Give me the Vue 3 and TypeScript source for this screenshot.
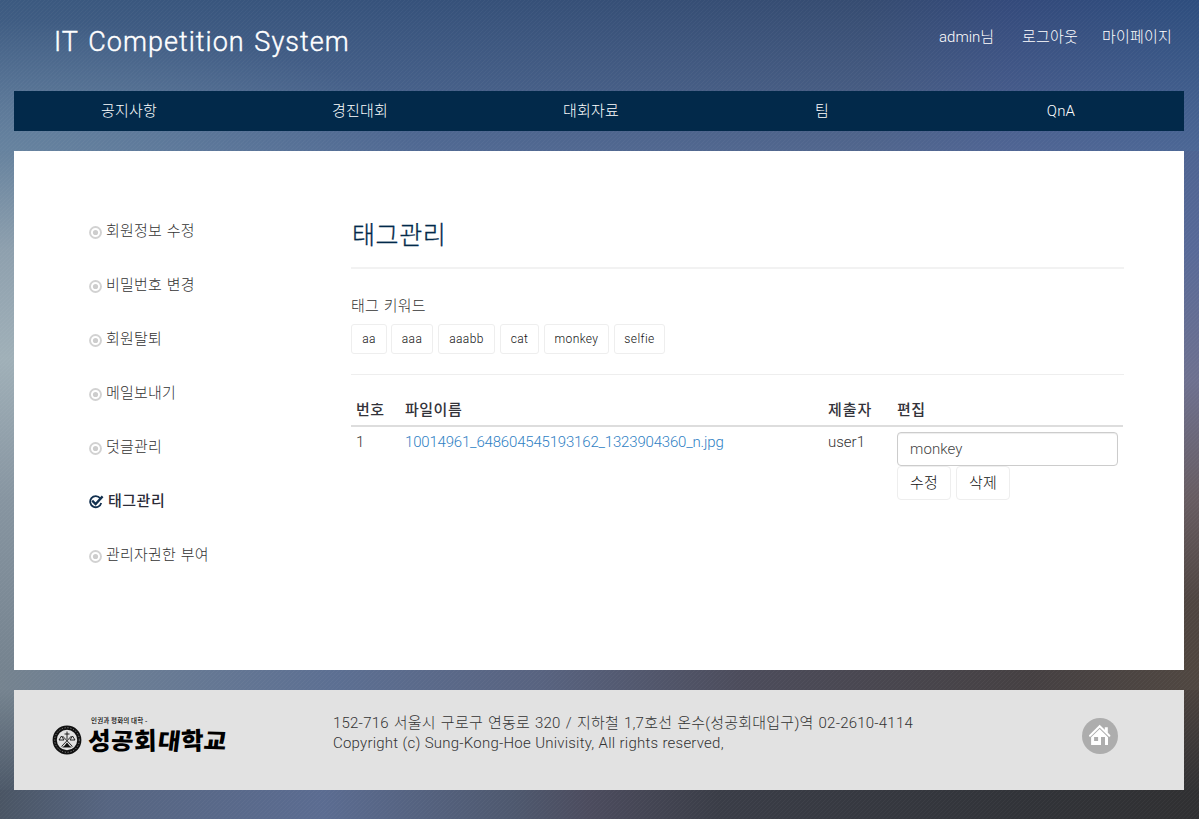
<script setup lang="ts">
interface MenuItem { label: string; active?: boolean }
const nav: string[] = ['공지사항', '경진대회', '대회자료', '팀', 'QnA']
const menu: MenuItem[] = [
  { label: '회원정보 수정' },
  { label: '비밀번호 변경' },
  { label: '회원탈퇴' },
  { label: '메일보내기' },
  { label: '덧글관리' },
  { label: '태그관리', active: true },
  { label: '관리자권한 부여' },
]
const tags = [
  { name: 'aa', width: 36 },
  { name: 'aaa', width: 42 },
  { name: 'aaabb', width: 57 },
  { name: 'cat', width: 39 },
  { name: 'monkey', width: 65 },
  { name: 'selfie', width: 51 },
]
const keyword = 'monkey'
</script>

<template>
  <div class="page">
    <header class="top">
      <h1 class="brand">IT Competition System</h1>
      <div class="user">
        <a class="u1">admin님</a>
        <a class="u2">로그아웃</a>
        <a class="u3">마이페이지</a>
      </div>
    </header>
    <nav class="nav">
      <a v-for="n in nav" :key="n">{{ n }}</a>
    </nav>
    <main class="content">
      <ul class="side">
        <li v-for="m in menu" :key="m.label" :class="{ active: m.active }">
          <svg v-if="m.active" class="check" viewBox="0 0 15 14">
            <path d="M11.2 3.2A5.6 5.6 0 1 0 12.2 8" fill="none" stroke="#12304f" stroke-width="1.8" />
            <path d="M3.2 5.6 6.6 9 13.6 1.4" fill="none" stroke="#12304f" stroke-width="2.3" />
          </svg>
          <svg v-else class="dot" viewBox="0 0 13 13">
            <circle cx="6.5" cy="6.5" r="5.5" fill="none" stroke="#d2d2d2" stroke-width="1.9" />
            <circle cx="6.5" cy="6.5" r="2.6" fill="#cdcdcd" />
          </svg>
          <span>{{ m.label }}</span>
        </li>
      </ul>
      <section class="panel">
        <h2>태그관리</h2>
        <div class="rule thick"></div>
        <p class="caption">태그 키워드</p>
        <div class="tags">
          <button v-for="t in tags" :key="t.name" class="btn tag" :style="{ width: t.width + 'px' }">{{ t.name }}</button>
        </div>
        <div class="rule"></div>
        <div class="table">
          <div class="row head"><b>번호</b><b>파일이름</b><b>제출자</b><b>편집</b></div>
          <div class="row body">
            <span>1</span>
            <a class="file">10014961_648604545193162_1323904360_n.jpg</a>
            <span class="author">user1</span>
            <div>
              <input class="field" type="text" :value="keyword" />
              <div class="actions">
                <button class="btn act">수정</button>
                <button class="btn act">삭제</button>
              </div>
            </div>
          </div>
        </div>
      </section>
    </main>
    <footer class="foot">
      <div class="logo">
        <svg class="seal" viewBox="0 0 30 30">
          <circle cx="15" cy="15" r="12.3" fill="none" stroke="#111" stroke-width="4.2" />
          <circle cx="15" cy="15" r="12.3" fill="none" stroke="#888" stroke-width="1" stroke-dasharray="1.2 1.7" />
          <path d="M15 6.5v8M12.5 9h5M7 15l2.5-4 2.5 4zM18 15l2.5-4 2.5 4zM9.5 21.5 19.5 11M20.5 21.5 10.5 11M10.5 22h9" stroke="#111" stroke-width=".9" fill="none" />
          <path d="M15 17.5 11.5 22h7z" fill="#111" />
        </svg>
        <div class="name">
          <div class="motto">인권과 평화의 대학 -</div>
          <div class="script"><span>성</span><span>공</span><span>회</span><span>대</span><span>학</span><span>교</span></div>
        </div>
      </div>
      <div class="address">
        <p class="a1">152-716 서울시 구로구 연동로 320 / 지하철 1,7호선 온수(성공회대입구)역 02-2610-4114</p>
        <p class="a2">Copyright (c) Sung-Kong-Hoe Univisity, All rights reserved,</p>
      </div>
      <svg class="home" viewBox="0 0 36 36">
        <circle cx="18" cy="18" r="18" fill="#adadad" />
        <path d="M22.8 9.3h3v6l-3-3z" fill="#fff" />
        <path d="M8 17.7 17.7 8.2 27.4 17.7" fill="none" stroke="#fff" stroke-width="2" stroke-linecap="round" />
        <path fill-rule="evenodd" d="M9.1 19.2 17.7 10.9 26 19.2V27H23v-8h-4v8H9.1zM12.1 19v4h4v-4z" fill="#fff" />
      </svg>
    </footer>
  </div>
</template>

<style>
body { margin: 0; overflow: hidden; }
</style>

<style scoped>
* { box-sizing: border-box; }
.page {
  width: 1199px;
  height: 819px;
  padding: 0 15px 0 14px;
  font: 300 15px/20px Roboto, "Noto Sans CJK KR", sans-serif;
  letter-spacing: .2px;
  color: #333;
  background:
    linear-gradient(135deg, rgba(255,255,255,.035) 12.5%, transparent 12.5% 50%, rgba(255,255,255,.035) 50% 62.5%, transparent 62.5%) 0 0 / 4px 4px,
    radial-gradient(ellipse 420px 130px at 0 151px, rgba(115,145,165,.6), rgba(115,145,165,0)) 0 0 / 100% 151px no-repeat,
    linear-gradient(180deg, rgba(125,145,188,0) 0, rgba(125,145,188,0.38) 151px) 0 0 / 100% 151px no-repeat,
    linear-gradient(90deg, #3c5a80, #36527b 33%, #364c71 72%, #344a7b 84%, #2e4e7e) 0 0 / 100% 151px no-repeat,
    linear-gradient(180deg, #66829e, #8ea0ae 19%, #a0b0b8 40%, #8795a1 67%, #75838f) 0 151px / 14px 519px no-repeat,
    linear-gradient(180deg, #4e6492, #586a98 19%, #6e7190 44%, #685d62 67%, #4f4541 87%, #50463f) 100% 151px / 15px 519px no-repeat,
    linear-gradient(90deg, #75838f, #6b7d94 10%, #5c6f92 28%, #586380 45%, #4c4c5b 62%, #454042 86%, #504741) 0 670px / 100% 20px no-repeat,
    linear-gradient(180deg, #75838f, #4d5969) 0 690px / 14px 100px no-repeat,
    linear-gradient(180deg, #4b423e, #323234) 100% 690px / 15px 100px no-repeat,
    linear-gradient(90deg, #4a5564, #566581 9%, #5b6c91 27%, #4e586e 43%, #4c4c5e 49%, #3a3d47 60%, #313338 86%, #303032) 0 790px / 100% 29px no-repeat;
}
h1, h2, p, ul { margin: 0; padding: 0; font-weight: 300; }
.top { height: 91px; display: flex; justify-content: space-between; }
.brand { padding: 25px 0 0 40px; font-size: 27px; line-height: 34px; color: #fff; letter-spacing: 1.05px; word-spacing: 2px; -webkit-text-stroke: .4px #fff; }
.user { display: flex; padding: 27px 12px 0 0; color: #fff; white-space: nowrap; }
.u1 { width: 83px; letter-spacing: 0; }
.u2 { width: 80px; }
.u3 { width: 70px; }
.nav { height: 40px; display: flex; background: #02294a; color: #fff; }
.nav a { width: 231px; padding-right: 1px; line-height: 40px; text-align: center; }
.nav a:last-child { flex: 1; padding: 0; }
.content { height: 519px; margin-top: 20px; background: #fff; display: flex; }
.side { width: 337px; padding: 70px 0 0 75px; list-style: none; word-spacing: 1px; }
.side li { height: 54px; display: flex; line-height: 20px; }
.side span { margin-left: 4px; }
.dot { width: 13px; height: 13px; margin-top: 5px; }
.check { width: 15px; height: 14px; margin-top: 4px; }
.side .active { font-weight: 500; color: #2c2c38; letter-spacing: .5px; }
.panel { width: 773px; padding-top: 67px; }
h2 { font-size: 25px; line-height: 36px; color: #02294a; padding-left: 1px; letter-spacing: .6px; -webkit-text-stroke: .3px #02294a; }
.rule { height: 1px; background: #eee; }
.rule.thick { height: 2px; margin-top: 13px; background: #f2f2f2; }
.caption { margin-top: 27px; word-spacing: 1px; }
.tags { display: flex; gap: 5px; margin: 8px 0 20px; }
.tags .btn:first-child { margin-right: -1px; }
.btn { font: 300 12px/18px Roboto, "Noto Sans CJK KR", sans-serif; color: #111; background: #fff; border: 1px solid #eee; border-radius: 3px; padding: 0; letter-spacing: .4px; }
.tag { height: 30px; }
.table { width: 772px; padding-top: 25px; }
.row { display: grid; grid-template-columns: 49px 423px 69px 226px; padding-left: 5px; }
.head { height: 27px; border-bottom: 2px solid #ddd; color: #33333a; letter-spacing: .5px; }
.head b { font-weight: 500; }
.head b:nth-child(3) { letter-spacing: 1px; }
.body { padding-top: 5px; }
.file { color: #2f7fc4; letter-spacing: -.18px; }
.author { letter-spacing: 0; }
.field { display: block; width: 221px; height: 34px; padding: 0 12px; border: 1px solid #ccc; border-radius: 4px; box-shadow: inset 0 1px 1px rgba(0,0,0,.075); font: 300 15px Roboto, sans-serif; color: #444; letter-spacing: .1px; }
.actions { display: flex; gap: 5px; }
.act { width: 54px; height: 34px; font-size: 15px; border-radius: 4px; letter-spacing: .1px; }
.foot { height: 100px; margin-top: 20px; background: #e2e2e2; display: flex; }
.logo { width: 176px; margin: 26px 0 0 38px; display: flex; }
.seal { width: 30px; height: 30px; margin-top: 9px; }
.name { margin-left: 6px; color: #000; white-space: nowrap; font-family: "Noto Sans CJK KR", sans-serif; }
.motto { height: 10px; padding-left: 3px; font-size: 6.5px; line-height: 8px; font-weight: 500; letter-spacing: .15px; }
.script { display: flex; height: 30px; font-size: 24.5px; line-height: 27px; font-weight: 900; letter-spacing: 0; }
.script span { width: 23px; transform: rotate(-4deg) skewX(-3deg); }
.script span:nth-child(even) { transform: rotate(2deg) skewX(-5deg) scaleY(.94); }
.script span:nth-child(4) { margin-left: 1px; }
.address { width: 854px; padding: 23px 0 0 105px; white-space: nowrap; }
.a1 { letter-spacing: .22px; word-spacing: 1.15px; }
.a2 { letter-spacing: .22px; word-spacing: .3px; }
.home { width: 36px; height: 36px; margin-top: 28px; }
</style>
